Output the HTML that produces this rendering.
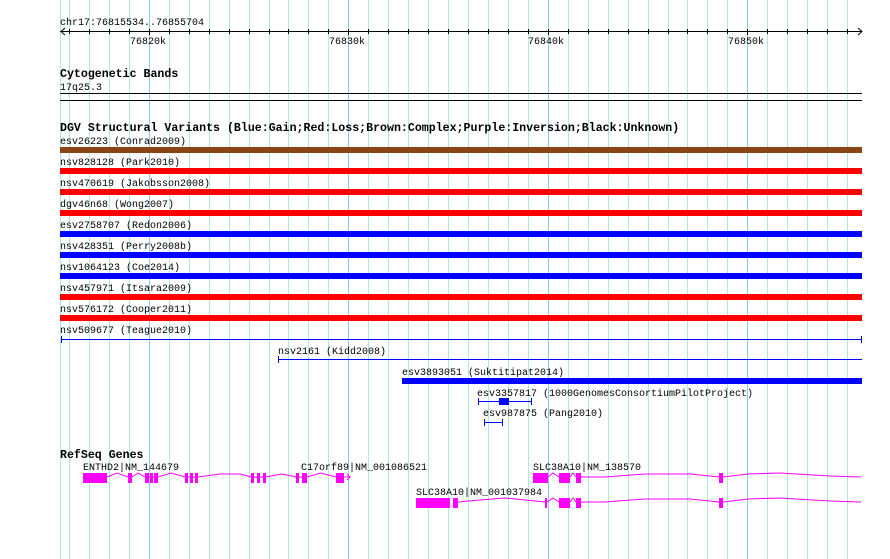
<!DOCTYPE html>
<html><head><meta charset="utf-8"><style>
html,body{margin:0;padding:0;background:#fff;width:890px;height:559px;overflow:hidden}
svg{display:block}
text{font-family:"Liberation Mono",monospace;font-size:10px;fill:#000}
.b{font-weight:bold;font-size:11.6px}
</style></head><body>
<svg width="890" height="559" xmlns="http://www.w3.org/2000/svg">
<g id="grid" stroke-width="1">
<line x1="60.5" y1="0" x2="60.5" y2="559" stroke="#aee6ee"/>
</g>
<script>
var g=document.getElementById('grid');var ns='http://www.w3.org/2000/svg';
for(var k=0;k<41;k++){var x=Math.round(69+k*19.95)+0.5;if(x>862)break;var l=document.createElementNS(ns,'line');l.setAttribute('x1',x);l.setAttribute('x2',x);l.setAttribute('y1',0);l.setAttribute('y2',559);var maj=(k%10==4);l.setAttribute('stroke',maj?'#88cbe8':'#aee6ee');g.appendChild(l);}
</script>
<text x="60" y="25">chr17:76815534..76855704</text>
<line x1="60" y1="31.5" x2="862" y2="31.5" stroke="#000"/>
<polyline points="65,28 61,31.5 65,35" fill="none" stroke="#000"/>
<polyline points="858,28 862,31.5 858,35" fill="none" stroke="#000"/>
<g id="ticks" stroke="#000"></g>
<script>
var t=document.getElementById('ticks');
for(var k=0;k<40;k++){var x=Math.round(69+k*19.95)+0.5;if(x>860)break;var l=document.createElementNS(ns,'line');l.setAttribute('x1',x);l.setAttribute('x2',x);var maj=(k%10==4);l.setAttribute('y1',29);l.setAttribute('y2',maj?35:34);t.appendChild(l);}
</script>
<text x="130" y="44">76820k</text>
<text x="329" y="44">76830k</text>
<text x="528" y="44">76840k</text>
<text x="728" y="44">76850k</text>

<text class="b" x="60" y="77">Cytogenetic Bands</text>
<text x="60" y="90">17q25.3</text>
<line x1="60" y1="93.5" x2="862" y2="93.5" stroke="#000"/>
<line x1="60" y1="100.5" x2="862" y2="100.5" stroke="#000"/>

<text class="b" x="60" y="131">DGV Structural Variants (Blue:Gain;Red:Loss;Brown:Complex;Purple:Inversion;Black:Unknown)</text>
<text x="60" y="144">esv26223 (Conrad2009)</text>
<rect x="60" y="147" width="802" height="6" fill="#8b4513"/>
<text x="60" y="165">nsv828128 (Park2010)</text>
<rect x="60" y="168" width="802" height="6" fill="#ff0000"/>
<text x="60" y="186">nsv470619 (Jakobsson2008)</text>
<rect x="60" y="189" width="802" height="6" fill="#ff0000"/>
<text x="60" y="207">dgv46n68 (Wong2007)</text>
<rect x="60" y="210" width="802" height="6" fill="#ff0000"/>
<text x="60" y="228">esv2758707 (Redon2006)</text>
<rect x="60" y="231" width="802" height="6" fill="#0000ff"/>
<text x="60" y="249">nsv428351 (Perry2008b)</text>
<rect x="60" y="252" width="802" height="6" fill="#0000ff"/>
<text x="60" y="270">nsv1064123 (Coe2014)</text>
<rect x="60" y="273" width="802" height="6" fill="#0000ff"/>
<text x="60" y="291">nsv457971 (Itsara2009)</text>
<rect x="60" y="294" width="802" height="6" fill="#ff0000"/>
<text x="60" y="312">nsv576172 (Cooper2011)</text>
<rect x="60" y="315" width="802" height="6" fill="#ff0000"/>
<text x="60" y="333">nsv509677 (Teague2010)</text>
<line x1="61" y1="339.5" x2="861" y2="339.5" stroke="#0000ff"/>
<line x1="61.5" y1="336" x2="61.5" y2="343" stroke="#0000ff"/>
<line x1="861.5" y1="336" x2="861.5" y2="343" stroke="#0000ff"/>
<text x="278" y="354">nsv2161 (Kidd2008)</text>
<line x1="278" y1="359.5" x2="862" y2="359.5" stroke="#0000ff"/>
<line x1="278.5" y1="356" x2="278.5" y2="363" stroke="#0000ff"/>
<text x="402" y="375">esv3893051 (Suktitipat2014)</text>
<rect x="402" y="378" width="460" height="6" fill="#0000ff"/>
<text x="477" y="396">esv3357817 (1000GenomesConsortiumPilotProject)</text>
<line x1="478" y1="401.5" x2="531" y2="401.5" stroke="#0000ff"/>
<line x1="478.5" y1="398" x2="478.5" y2="405" stroke="#0000ff"/>
<line x1="531.5" y1="398" x2="531.5" y2="405" stroke="#0000ff"/>
<rect x="499" y="398" width="10" height="7" fill="#0000ff"/>
<text x="483" y="416">esv987875 (Pang2010)</text>
<line x1="484" y1="422.5" x2="502" y2="422.5" stroke="#0000ff"/>
<line x1="484.5" y1="419" x2="484.5" y2="426" stroke="#0000ff"/>
<line x1="502.5" y1="419" x2="502.5" y2="426" stroke="#0000ff"/>

<text class="b" x="60" y="458">RefSeq Genes</text>
<text x="83" y="470">ENTHD2|NM_144679</text>
<text x="301" y="470">C17orf89|NM_001086521</text>
<g fill="#ff00ff">
<rect x="83" y="473" width="24" height="10"/>
<rect x="128" y="473" width="4" height="10"/>
<rect x="145" y="473" width="4" height="10"/>
<rect x="150" y="473" width="3" height="10"/>
<rect x="154" y="473" width="4" height="10"/>
<rect x="185" y="473" width="3" height="10"/>
<rect x="190" y="473" width="3" height="10"/>
<rect x="195" y="473" width="3" height="10"/>
<rect x="251" y="473" width="3" height="10"/>
<rect x="257" y="473" width="3" height="10"/>
<rect x="263" y="473" width="3" height="10"/>
<rect x="296" y="473" width="3" height="10"/>
<rect x="302" y="473" width="5" height="10"/>
<rect x="336" y="473" width="8" height="10"/>
</g>
<polyline fill="none" stroke="#ff00ff" points="107,477 117,473 128,477 132,477 138,473 145,477 158,477 171,473 185,477 198,477 220,474 240,474 251,477 266,477 282,474 296,477 307,477 321,473 336,477 344,477 350,477" />
<polyline fill="none" stroke="#ff00ff" points="347,474 350,477 347,480"/>

<text x="533" y="470">SLC38A10|NM_138570</text>
<g fill="#ff00ff">
<rect x="533" y="473" width="15" height="10"/>
<rect x="559" y="473" width="11" height="10"/>
<rect x="576" y="473" width="5" height="10"/>
<rect x="719" y="473" width="4" height="10"/>
</g>
<polyline fill="none" stroke="#ff00ff" points="548,477 553,473 559,477 570,477 573,473 576,477 581,477 605,477 645,474 690,474 719,477 723,477 748,474 780,473 830,476 861,477"/>

<text x="416" y="495">SLC38A10|NM_001037984</text>
<g fill="#ff00ff">
<rect x="416" y="498" width="34" height="10"/>
<rect x="453" y="498" width="5" height="10"/>
<rect x="545" y="498" width="2" height="10"/>
<rect x="559" y="498" width="11" height="10"/>
<rect x="576" y="498" width="5" height="10"/>
<rect x="719" y="498" width="4" height="10"/>
</g>
<polyline fill="none" stroke="#ff00ff" points="458,502 480,500 505,498 525,500 545,502 547,502 553,498 559,502 570,502 573,498 576,502 581,502 605,502 645,499 690,499 719,502 723,502 748,499 780,498 830,501 861,502"/>
</svg>
</body></html>
